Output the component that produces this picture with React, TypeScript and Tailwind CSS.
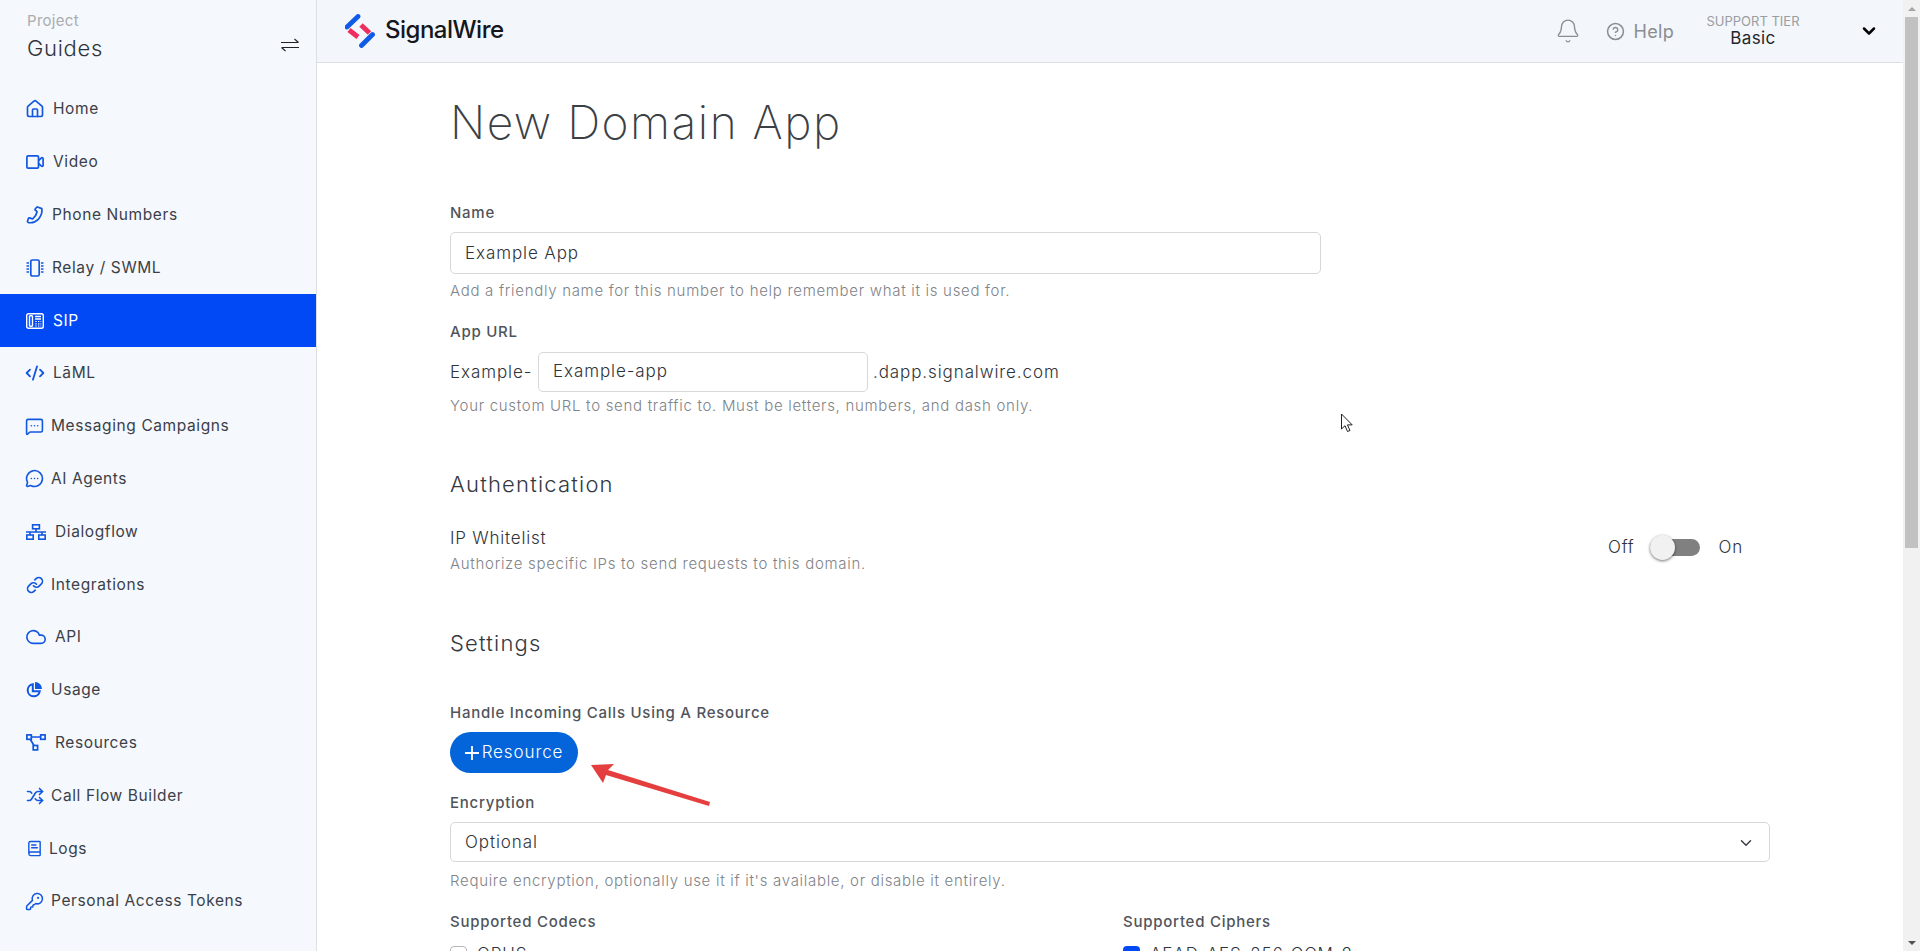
import React from "react";
import { ChevronDown, Cloud, KeyRound, Link, MessageCircleMore, MessageSquareMore, Shuffle, House, CodeXml, BookText, Bell, CircleHelp } from "lucide-react";

const font = "font-['Inter','Liberation_Sans',sans-serif]";

const VideoIcon = () => (
  <svg viewBox="0 0 18 14" className="w-[18px] h-[14px]" fill="none" stroke="currentColor" strokeWidth="1.7" strokeLinejoin="round">
    <rect x="0.9" y="0.9" width="11.6" height="12.2" rx="1.2" />
    <path d="M12.5 5.5l3-2.6c.6-.5 1.6-.2 1.6.7v6.8c0 .9-1 1.2-1.6.7l-3-2.6" />
  </svg>
);
const Phone = () => (
  <svg viewBox="0 0 18 18" className="w-[18px] h-[18px]" fill="none" stroke="currentColor" strokeWidth="1.7" strokeLinejoin="round">
    <path d="M12.2 1.2l3.6 1.4c.6 3.9-1 7.9-3.6 10.7-2.5 2.5-6 3.9-9.5 3.3-1-.3-1.4-1-1.1-1.9l.9-2.3c.2-.5.7-.7 1.2-.5l2.2.9c.4.2.7.1 1-.2 2.1-1.7 3.6-4 4.1-6.6.1-.4-.1-.7-.4-.9l-1.2-.9c-.4-.3-.4-.7-.2-1.1l.9-1.2c.2-.3.5-.7.9-.7z" />
  </svg>
);
const Chip = () => (
  <svg viewBox="0 0 18 18" className="w-[18px] h-[18px]" fill="none" stroke="currentColor" strokeWidth="1.7">
    <rect x="4.8" y="1" width="8.4" height="16" rx="1.6" />
    <path d="M0.5 4h2.5M0.5 7h2.5M0.5 10h2.5M0.5 13h2.5M15 4h2.5M15 7h2.5M15 10h2.5M15 13h2.5" strokeWidth="1.3" />
  </svg>
);
const Fax = () => (
  <svg viewBox="0 0 18 16" className="w-[18px] h-[16px]" fill="none" stroke="currentColor" strokeWidth="1.4">
    <rect x="0.7" y="0.8" width="16.6" height="14.4" rx="1.8" />
    <path d="M3.5 2.8v10.4M6.5 2.8v10.4M3.5 2.8h3M3.5 13.2h3" />
    <path d="M9 3.5h6M9 6h6" />
    <path d="M9.3 8.5h1.4M12 8.5h1.4M14.5 8.5h.8M9.3 10.8h1.4M12 10.8h1.4M14.5 10.8h.8M9.3 13h1.4M12 13h1.4M14.5 13h.8" strokeWidth="1.2" />
  </svg>
);
const Nodes = () => (
  <svg viewBox="0 0 20 17" className="w-[20px] h-[17px]" fill="none" stroke="currentColor" strokeWidth="1.7">
    <rect x="0.9" y="0.9" width="4.4" height="4.4" />
    <rect x="14.7" y="0.9" width="4.4" height="4.4" />
    <rect x="7.2" y="11.5" width="4.4" height="4.4" />
    <path d="M5.3 3h9.4M4.2 5.3l3.8 6.2" />
  </svg>
);
const Tree = () => (
  <svg viewBox="0 0 20 16" className="w-[20px] h-[16px]" fill="none" stroke="currentColor" strokeWidth="1.6">
    <rect x="6.6" y="0.8" width="6.8" height="4" />
    <rect x="0.8" y="11" width="6.4" height="4.2" />
    <rect x="12.8" y="11" width="6.4" height="4.2" />
    <path d="M10 4.8v3.2M0 8h20M4 8v3M16 8v3" />
  </svg>
);
const Pie = () => (
  <svg viewBox="0 0 16 16" className="w-[16px] h-[16px]" fill="none" stroke="currentColor" strokeWidth="2">
    <path d="M6.8 2.2A6.1 6.1 0 1 0 13.8 9.2H6.8Z" />
    <path d="M9 0A7 7 0 0 1 16 7H9Z" fill="currentColor" stroke="none" />
  </svg>
);

const nav = [
  { label: "Home", icon: <House size={20} strokeWidth={2} className="-ml-[1px] -mr-[1px]" />, cls: "ml-[9px]" },
  { label: "Video", icon: <VideoIcon />, cls: "ml-[9px]" },
  { label: "Phone Numbers", icon: <Phone />, cls: "ml-[8px]" },
  { label: "Relay / SWML", icon: <Chip />, cls: "ml-[8px]" },
  { label: "SIP", icon: <Fax />, cls: "ml-[9px]", active: true },
  { label: "LāML", icon: <CodeXml size={20} strokeWidth={2.2} className="-ml-[1px] -mr-[1px]" />, cls: "ml-[9px]" },
  { label: "Messaging Campaigns", icon: <MessageSquareMore size={19} strokeWidth={2} className="-ml-[1px] -mr-[1px]" />, cls: "ml-[8px]" },
  { label: "AI Agents", icon: <MessageCircleMore size={19} strokeWidth={2} className="-ml-[1px] -mr-[1px]" />, cls: "ml-[8px]" },
  { label: "Dialogflow", icon: <Tree />, cls: "ml-[9px]" },
  { label: "Integrations", icon: <Link size={18} strokeWidth={2.2} className="-mr-[1px]" />, cls: "ml-[8px]" },
  { label: "API", icon: <Cloud size={22} strokeWidth={1.8} className="-ml-[1px] -mr-[1px]" />, cls: "ml-[9px]" },
  { label: "Usage", icon: <Pie />, cls: "ml-[9px]" },
  { label: "Resources", icon: <Nodes />, cls: "ml-[9px]" },
  { label: "Call Flow Builder", icon: <Shuffle size={18} strokeWidth={2.2} className="-mr-[1px]" />, cls: "ml-[8px]" },
  { label: "Logs", icon: <BookText size={17} strokeWidth={2} className="-mr-[1px]" />, cls: "ml-[7px]" },
  { label: "Personal Access Tokens", icon: <KeyRound size={19} strokeWidth={1.9} className="-ml-[1px] -mr-[1px]" />, cls: "ml-[8px]" },
];

function Sidebar() {
  return (
    <aside className="w-[317px] shrink-0 h-full bg-[#f5f8fc] border-r border-[#dcdfe3] flex flex-col">
      <div className="h-[80px] pl-[27px] pr-[17px] flex justify-between">
        <div>
          <div className="mt-[11px] text-[15px] leading-[20px] tracking-[0.3px] text-[#a9acb0]">Project</div>
          <div className="mt-[3px] text-[22px] leading-[28px] tracking-[0.7px] font-light text-[#2f343b]">Guides</div>
        </div>
        <svg viewBox="0 0 18 14" className="mt-[38px] w-[18px] h-[14px]" fill="none" stroke="#222" strokeWidth="1.1">
          <path d="M0 4.5h17.5M17.5 4.5L13.5 1" />
          <path d="M18 9.5H.5M.5 9.5l4 3.5" />
        </svg>
      </div>
      <nav className="mt-[3px]">
        {nav.map((n) => (
          <div
            key={n.label}
            className={
              n.active
                ? "h-[52.8px] pl-[26px] flex items-center bg-[#0049f5] text-white"
                : "h-[52.8px] pl-[26px] flex items-center text-[#3b4048]"
            }
          >
            <span className={n.active ? "text-white" : "text-[#1257e0]"}>{n.icon}</span>
            <span className={`${n.cls} text-[15.5px] leading-[20px] tracking-[0.6px]`}>{n.label}</span>
          </div>
        ))}
      </nav>
    </aside>
  );
}

function Logo() {
  return (
    <svg viewBox="0 0 30 34" className="w-[30px] h-[34px]" strokeLinecap="round" fill="none">
      <path d="M13 2.5L2 13" stroke="#0f5be8" strokeWidth="4.8" />
      <path d="M27.5 20.5L16.5 31.5" stroke="#0f5be8" strokeWidth="4.8" />
      <path d="M4 16L13 23" stroke="#ef2d5e" strokeWidth="5" strokeLinecap="butt" />
      <path d="M16 11L24.5 19" stroke="#ef2d5e" strokeWidth="5" strokeLinecap="butt" />
    </svg>
  );
}

function Header() {
  return (
    <header className="h-[63px] shrink-0 bg-[#f3f6fa] border-b border-[#dcdfe3] flex items-center pl-[28px]">
      <Logo />
      <span className="ml-[10px] pb-[2px] text-[24px] font-medium tracking-[-0.5px] text-[#14171c]">SignalWire</span>
      <div className="ml-auto flex items-center text-[#8a8d91]">
        <Bell size={26} strokeWidth={1.2} />
        <CircleHelp size={19} strokeWidth={1.9} className="ml-[25px]" />
        <span className="ml-[9px] text-[18px] tracking-[0.3px]">Help</span>
        <div className="ml-[33px] pb-[2px] w-[92px] flex flex-col items-center">
          <span className="text-[13px] leading-[16px] whitespace-nowrap text-[#9a9da1]">SUPPORT TIER</span>
          <span className="text-[17px] leading-[18px] tracking-[0.4px] text-[#23272d]">Basic</span>
        </div>
        <ChevronDown size={20} strokeWidth={3} className="ml-[60px] mr-[24px] text-black" />
      </div>
    </header>
  );
}

const Label = ({ cls, children }: { cls: string; children: React.ReactNode }) => (
  <div className={`${cls} text-[15px] leading-[20px] font-medium tracking-[0.75px] text-[#50545b]`}>{children}</div>
);
const Hint = ({ cls, children }: { cls: string; children: React.ReactNode }) => (
  <div className={`${cls} text-[15px] leading-[20px] font-light tracking-[0.7px] text-[#808388]`}>{children}</div>
);

function Main() {
  return (
    <main className="relative flex-1 overflow-hidden bg-white pl-[133px]">
      <div className="w-[1320px]">
        <h1 className="mt-[29px] text-[46px] leading-[60px] font-extralight tracking-[1.5px] text-[#3b3f46]">New Domain App</h1>

        <Label cls="mt-[51px]">Name</Label>
        <div className="mt-[9px] w-[871px] h-[42px] rounded-[5px] border border-[#d5d7da] flex items-center pl-[14px] pt-[2px] text-[17px] font-light tracking-[0.9px] text-[#2f343b]">Example App</div>
        <Hint cls="mt-[7px]">Add a friendly name for this number to help remember what it is used for.</Hint>

        <Label cls="mt-[21px]">App URL</Label>
        <div className="mt-[10px] h-[40px] flex items-center pt-[2px] text-[17px] font-light tracking-[0.9px] text-[#2f343b]">
          <span className="w-[88px]">Example-</span>
          <div className="-mt-[2px] w-[330px] h-[40px] rounded-[5px] border border-[#d5d7da] flex items-center pl-[14px]">Example-app</div>
          <span className="ml-[5px]">.dapp.signalwire.com</span>
        </div>
        <Hint cls="mt-[4px]">Your custom URL to send traffic to. Must be letters, numbers, and dash only.</Hint>

        <h2 className="mt-[54px] text-[22px] leading-[28px] font-light tracking-[1.2px] text-[#33383f]">Authentication</h2>

        <div className="flex justify-between items-start pr-[27px]">
          <div>
            <div className="mt-[29px] text-[17px] leading-[22px] font-light tracking-[0.8px] text-[#2f343b]">IP Whitelist</div>
            <Hint cls="mt-[5px]">Authorize specific IPs to send requests to this domain.</Hint>
          </div>
          <div className="mt-[38px] flex items-center text-[17px] leading-[22px] font-light tracking-[0.8px] text-[#2f343b]">
            <span>Off</span>
            <div className="ml-[16px] w-[50px] h-[17px] rounded-full bg-[#808080] flex items-center">
              <div className="w-[25px] h-[25px] rounded-full bg-[#f1f1f1] shadow-[0_1px_3px_rgba(0,0,0,0.55)]" />
            </div>
            <span className="ml-[18px]">On</span>
          </div>
        </div>

        <h2 className="mt-[55px] text-[22px] leading-[28px] font-light tracking-[1.2px] text-[#33383f]">Settings</h2>

        <Label cls="mt-[46px]">Handle Incoming Calls Using A Resource</Label>
        <button className="mt-[9px] w-[128px] h-[41px] rounded-full bg-[#0464d9] text-white flex items-center justify-center text-[17px] font-light tracking-[0.9px]">
          <svg viewBox="0 0 14 14" className="w-[14px] h-[14px] mr-[3px]" stroke="currentColor" strokeWidth="1.8"><path d="M7 0v14M0 7h14" /></svg>
          Resource
        </button>

        <Label cls="mt-[20px]">Encryption</Label>
        <div className="mt-[9px] h-[40px] rounded-[5px] border border-[#d5d7da] flex items-center justify-between pl-[14px] pr-[14px] pt-[2px] text-[17px] font-light tracking-[0.9px] text-[#2f343b]">
          Optional
          <ChevronDown size={18} strokeWidth={2} className="text-[#3b3f46]" />
        </div>
        <Hint cls="mt-[9px]">Require encryption, optionally use it if it's available, or disable it entirely.</Hint>

        <div className="mt-[21px] grid grid-cols-[673px_1fr]">
          <div>
            <Label cls="">Supported Codecs</Label>
            <div className="mt-[13px] flex items-center text-[17px] leading-[18px] font-light tracking-[0.9px] text-[#2f343b]">
              <span className="w-[17px] h-[17px] rounded-[4px] border border-[#b5b7ba] bg-white" />
              <span className="ml-[10px]">OPUS</span>
            </div>
          </div>
          <div>
            <Label cls="">Supported Ciphers</Label>
            <div className="mt-[13px] flex items-center text-[17px] leading-[18px] font-light tracking-[0.9px] text-[#2f343b]">
              <span className="w-[17px] h-[17px] rounded-[4px] bg-[#0049f5]" />
              <span className="ml-[10px]">AEAD_AES_256_GCM_8</span>
            </div>
          </div>
        </div>
      </div>

      <svg viewBox="0 0 130 50" className="absolute left-[265px] top-[694px] w-[130px] h-[50px]" fill="#e53e3e">
        <path d="M9 8 L32 7 L26 13 L128 45 L127 49 L24 18 L21 26 Z" />
      </svg>
      <svg viewBox="0 0 14 20" className="absolute left-[1023px] top-[350px] w-[14px] h-[20px]" fill="white" stroke="#222" strokeWidth="1">
        <path d="M1.5 1v15l3.5-3.3 2.5 5.8 2.5-1-2.6-5.6h4.8z" />
      </svg>
    </main>
  );
}

function Scrollbar() {
  return (
    <div className="w-[17px] shrink-0 h-full bg-[#f1f1f1] flex flex-col items-center">
      <div className="h-[17px] w-full flex items-center justify-center">
        <div className="w-0 h-0 border-l-[4px] border-r-[4px] border-b-[4px] border-l-transparent border-r-transparent border-b-[#a3a3a3]" />
      </div>
      <div className="w-[13px] h-[531px] bg-[#c1c1c1]" />
      <div className="mt-auto h-[17px] w-full flex items-center justify-center">
        <div className="w-0 h-0 border-l-[4px] border-r-[4px] border-t-[4px] border-l-transparent border-r-transparent border-t-[#505050]" />
      </div>
    </div>
  );
}

export default function App() {
  return (
    <div className={`${font} w-full h-[951px] flex overflow-hidden bg-white`}>
      <Sidebar />
      <div className="flex-1 min-w-0 h-full flex flex-col">
        <Header />
        <Main />
      </div>
      <Scrollbar />
    </div>
  );
}
